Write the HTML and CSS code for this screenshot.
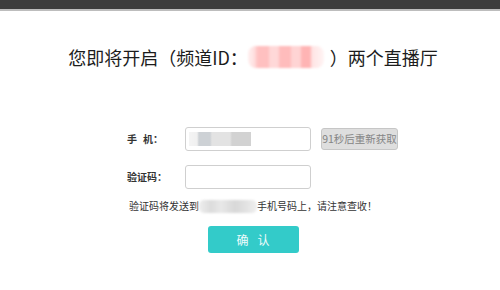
FILE: index.html
```html
<!DOCTYPE html>
<html lang="zh-CN">
<head>
<meta charset="utf-8">
<title>开启直播厅</title>
<link rel="stylesheet" href="styles.css">
</head>
<body>
<div class="topbar"></div>
<div class="page">
  <h1 class="title"><span>您即将开启（频道ID：</span><span class="mask-id"></span><span>）两个直播厅</span></h1>
  <div class="form">
    <div class="label">手<span class="sp"></span>机：</div>
    <div class="field"><span class="mask-phone"></span></div>
    <div class="resend">91秒后重新获取</div>
    <div class="label">验证码：</div>
    <div class="field"></div>
    <div></div>
  </div>
  <p class="notice"><span>验证码将发送到</span><span class="mask-num"></span><span>手机号码上，请注意查收！</span></p>
  <div class="confirm"><span>确</span><span>认</span></div>
</div>
</body>
</html>
```

FILE: styles.css
```css
html, body {
  margin: 0;
  padding: 0;
  background: #ffffff;
}
body {
  font-family: "Noto Sans CJK SC", "Noto Sans", sans-serif;
  color: #222;
}
.topbar {
  height: 9px;
  background: #3d3d3d;
  border-bottom: 2px solid #bdbdbd;
}
.page {
  padding-left: 6px;
}
.title {
  margin: 34px 0 0;
  display: flex;
  justify-content: center;
  align-items: center;
  font-size: 18px;
  line-height: 24px;
  font-weight: normal;
  color: #1c1c1c;
}
.mask-id {
  display: inline-block;
  width: 76px;
  height: 22px;
  margin-right: 6px;
  border-radius: 8px;
  background: linear-gradient(90deg, #fff0f0 0, #ffe0e0 6px, #ffc0c0 10px, #ffc0c0 20px, #ffd8d8 22px, #ffd8d8 30px, #ffbcbc 32px, #ffbcbc 42px, #ffd4d4 44px, #ffd4d4 52px, #ffb4b4 54px, #ffb4b4 62px, #ffe4e4 64px, #fff4f4 76px);
  filter: blur(1px);
}
.form {
  margin: 58px 0 0 calc(50% - 126px);
  display: grid;
  grid-template-columns: 48px 126px 77px;
  column-gap: 10px;
  row-gap: 14px;
  align-items: center;
}
.label {
  font-size: 10px;
  font-weight: bold;
  color: #333;
  line-height: 14px;
  white-space: nowrap;
}
.sp {
  display: inline-block;
  width: 6px;
}
.field {
  box-sizing: border-box;
  height: 24px;
  border: 1px solid #cfcfcf;
  border-radius: 3px;
  background: #fff;
  display: flex;
  align-items: center;
  padding-left: 3px;
}
.mask-phone {
  display: inline-block;
  width: 62px;
  height: 14px;
  background: linear-gradient(90deg, #f4f4f4 0, #f0f0f0 8px, #cdd1d5 10px, #cdd1d5 21px, #e3e3e3 23px, #e3e3e3 41px, #d2d2d2 43px, #d2d2d2 62px);
  filter: blur(0.6px);
}
.resend {
  box-sizing: border-box;
  height: 22px;
  border: 1px solid #c6c6c6;
  border-radius: 3px;
  background: #dedede;
  color: #858585;
  font-size: 10.5px;
  line-height: 20px;
  text-align: center;
  white-space: nowrap;
}
.notice {
  margin: 10px 0 0;
  display: flex;
  justify-content: center;
  align-items: center;
  font-size: 10px;
  line-height: 14px;
  color: #333;
}
.mask-num {
  display: inline-block;
  width: 58px;
  height: 13px;
  border-radius: 5px;
  background: linear-gradient(90deg, #eeeeee 0, #dcdcdc 12px, #e8e8e8 22px, #d8d8d8 36px, #e4e4e4 48px, #efefef 58px);
  filter: blur(0.8px);
}
.confirm {
  width: 91px;
  height: 27px;
  margin: 13px auto 0;
  background: #33cbc9;
  border-radius: 3px;
  display: flex;
  justify-content: center;
  align-items: center;
  gap: 9px;
  color: #effcfc;
  font-size: 12px;
}
```
